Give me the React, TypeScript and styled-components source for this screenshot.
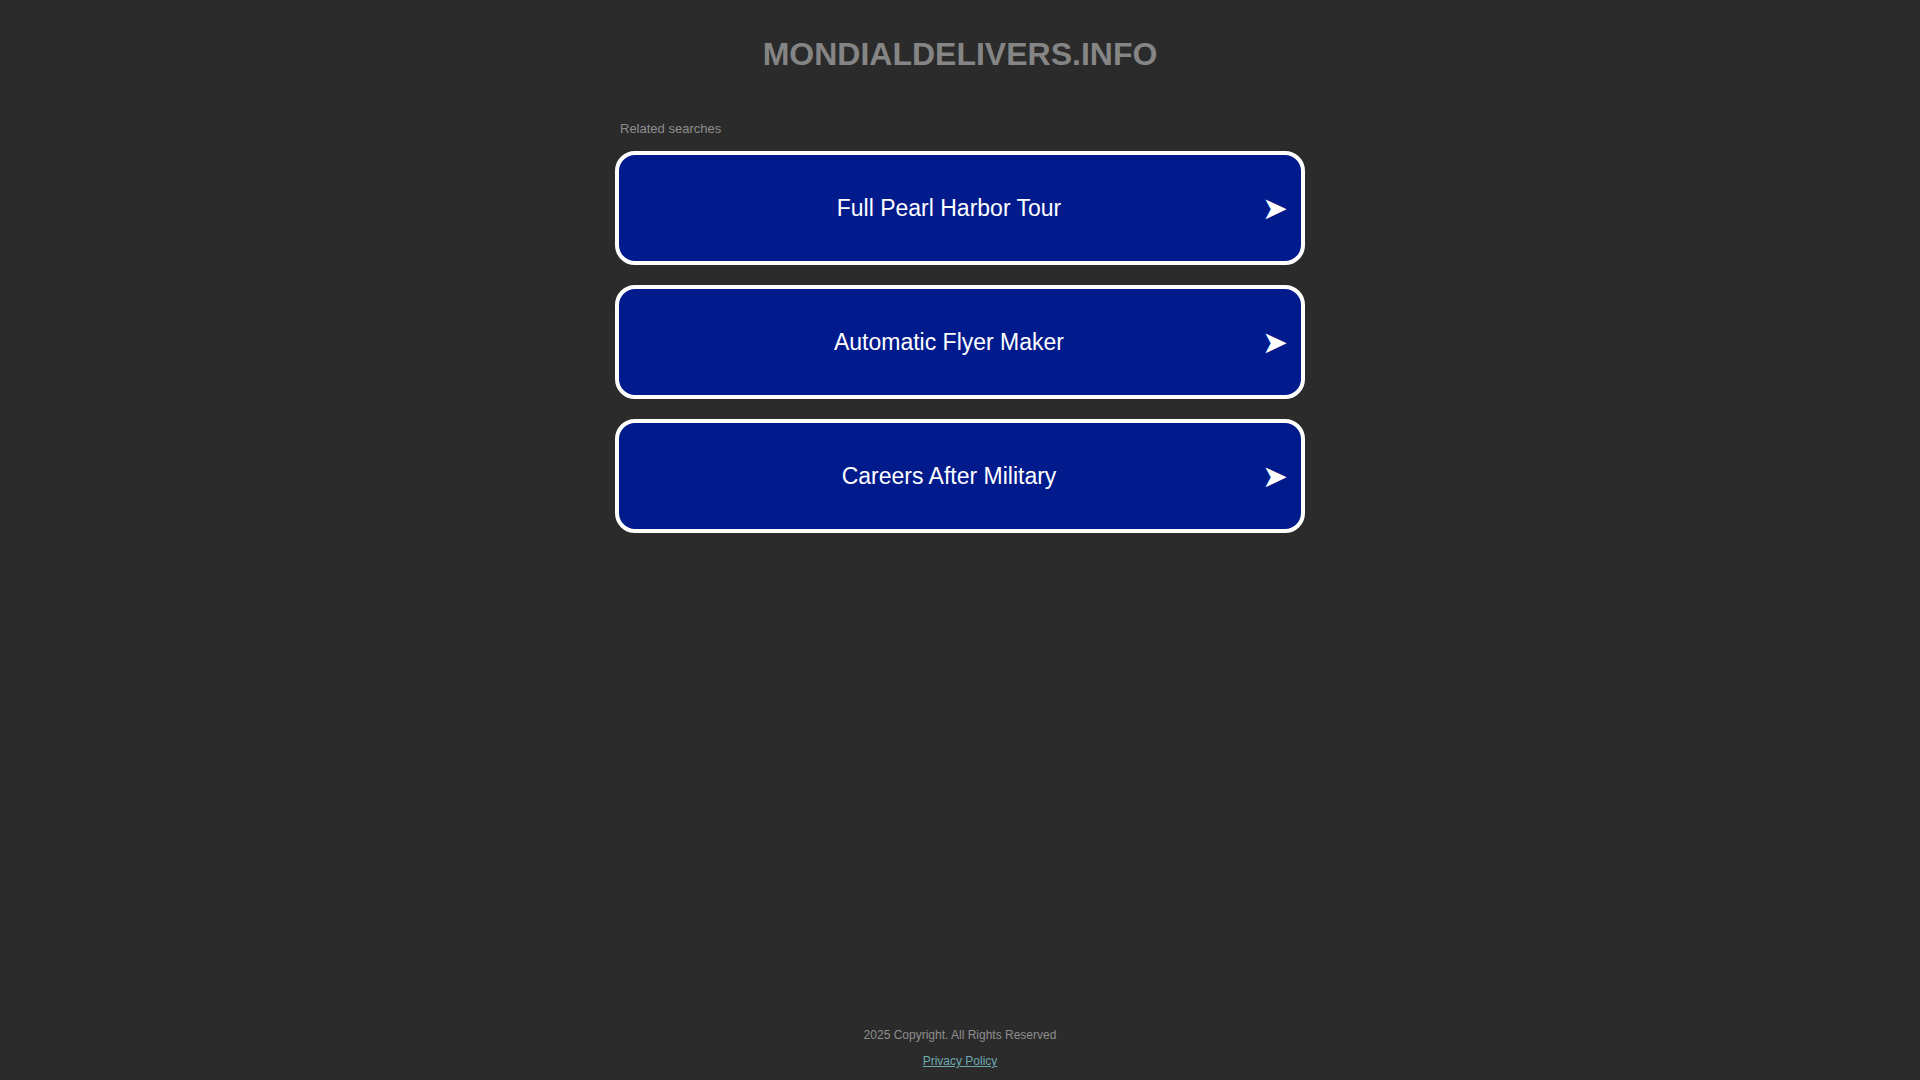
import React from "react";
import styled, { createGlobalStyle } from "styled-components";

const Global = createGlobalStyle`
  html, body { margin: 0; padding: 0; background: #2b2b2b; }
  body { font-family: "Liberation Sans", Arial, sans-serif; }
`;

const Page = styled.div`
  min-height: 1080px;
  display: flex;
  flex-direction: column;
  align-items: center;
`;

const Main = styled.main`
  flex: 1;
  width: 690px;
  display: flex;
  flex-direction: column;
`;

const Title = styled.h1`
  margin: 32px 0 0;
  text-align: center;
  font-size: 32px;
  line-height: 44px;
  font-weight: bold;
  color: #858585;
`;

const Label = styled.div`
  margin: 45px 0 0 5px;
  font-size: 13px;
  line-height: 16px;
  color: #8e8e8e;
`;

const List = styled.div`
  margin-top: 14px;
  display: flex;
  flex-direction: column;
  gap: 20px;
`;

const Item = styled.a`
  box-sizing: border-box;
  height: 114px;
  border: 4px solid #ffffff;
  border-radius: 20px;
  background: #011a8c;
  display: flex;
  align-items: center;
  padding: 0 15px 0 17px;
  color: #ffffff;
  text-decoration: none;
`;

const ItemText = styled.span`
  flex: 1;
  text-align: center;
  font-size: 23px;
  padding-top: 1px;
`;

const Arrow = styled.span`
  width: 24px;
  font-size: 31px;
  line-height: 1;
  text-align: right;
  font-family: "DejaVu Sans", sans-serif;
`;

const Footer = styled.footer`
  display: flex;
  flex-direction: column;
  align-items: center;
  gap: 10px;
  padding-bottom: 11px;
  font-size: 12px;
  line-height: 16px;
  color: #8e8e8e;
`;

const PolicyLink = styled.a`
  color: #6fa8b0;
  text-decoration: underline;
`;

const items = ["Full Pearl Harbor Tour", "Automatic Flyer Maker", "Careers After Military"];

export default function App() {
  return (
    <Page>
      <Global />
      <Main>
        <Title>MONDIALDELIVERS.INFO</Title>
        <Label>Related searches</Label>
        <List>
          {items.map((t) => (
            <Item key={t} href="#">
              <ItemText>{t}</ItemText>
              <Arrow>➤</Arrow>
            </Item>
          ))}
        </List>
      </Main>
      <Footer>
        <div>2025 Copyright. All Rights Reserved</div>
        <PolicyLink href="#">Privacy Policy</PolicyLink>
      </Footer>
    </Page>
  );
}
